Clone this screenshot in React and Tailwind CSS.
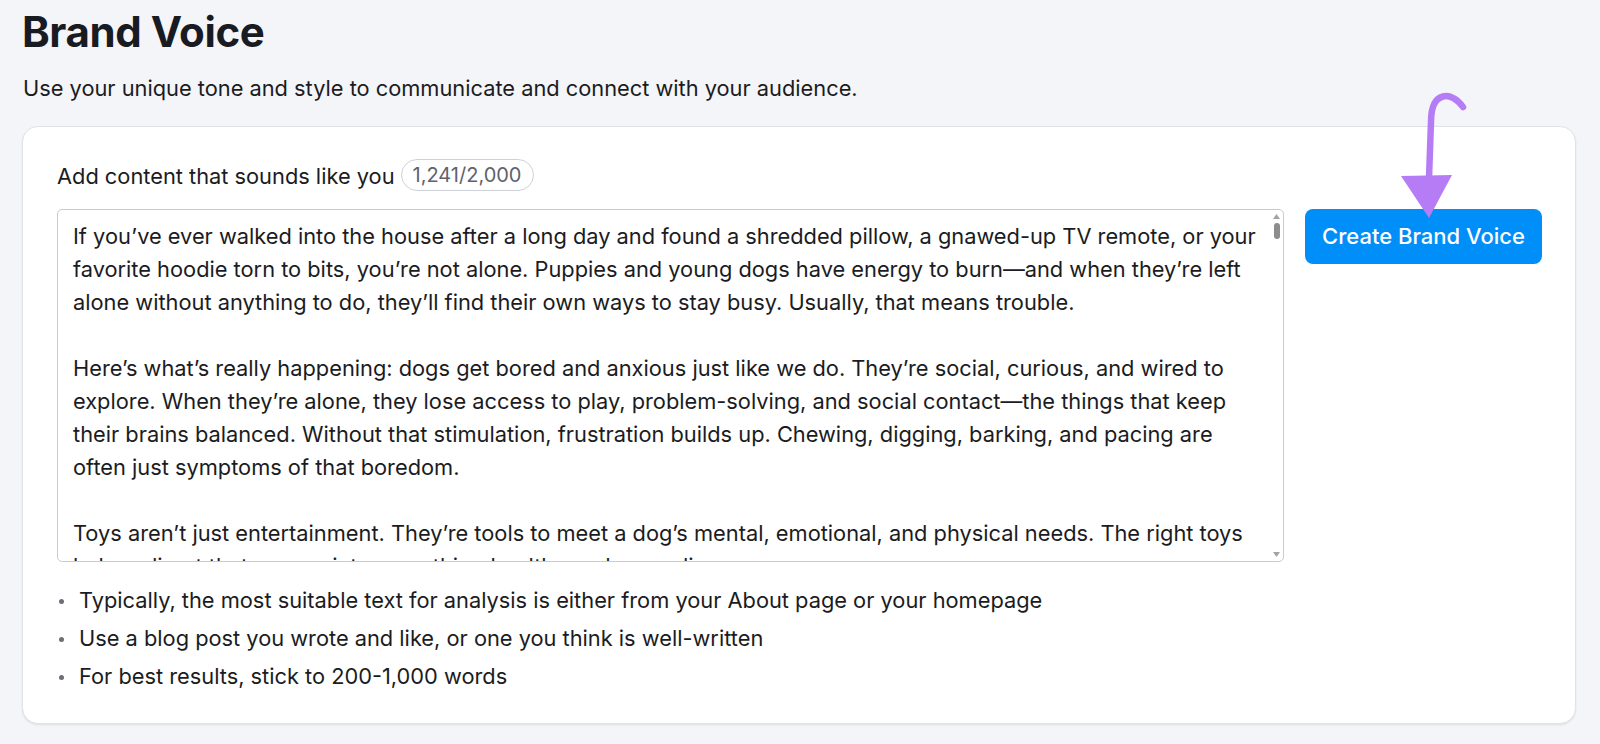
import React from 'react';

const sampleLines = [
  'If you’ve ever walked into the house after a long day and found a shredded pillow, a gnawed-up TV remote, or your',
  'favorite hoodie torn to bits, you’re not alone. Puppies and young dogs have energy to burn—and when they’re left',
  'alone without anything to do, they’ll find their own ways to stay busy. Usually, that means trouble.',
  '',
  'Here’s what’s really happening: dogs get bored and anxious just like we do. They’re social, curious, and wired to',
  'explore. When they’re alone, they lose access to play, problem-solving, and social contact—the things that keep',
  'their brains balanced. Without that stimulation, frustration builds up. Chewing, digging, barking, and pacing are',
  'often just symptoms of that boredom.',
  '',
  'Toys aren’t just entertainment. They’re tools to meet a dog’s mental, emotional, and physical needs. The right toys',
  'help redirect that energy into something healthy and rewarding.',
];

const tips = [
  'Typically, the most suitable text for analysis is either from your About page or your homepage',
  'Use a blog post you wrote and like, or one you think is well-written',
  'For best results, stick to 200-1,000 words',
];

const ScrollTrack = () => (
  <div className="w-[13px] flex-shrink-0 flex flex-col items-center pt-[4px] pb-[4px]">
    <svg width="7" height="5" viewBox="0 0 7 5">
      <path d="M3.5 0 L7 5 L0 5 Z" fill="#a3a3a3" />
    </svg>
    <div className="w-[6px] h-[16px] rounded-full bg-[#8d8d8d] mt-[4px]" />
    <div className="flex-1" />
    <svg width="7" height="5" viewBox="0 0 7 5">
      <path d="M0 0 L7 0 L3.5 5 Z" fill="#a3a3a3" />
    </svg>
  </div>
);

const App = () => {
  return (
    <div className="relative min-h-screen bg-[#f4f5f9] px-[22px] pt-[6px] font-['Inter',sans-serif] text-[#1b1c22]">
      <h1 className="text-[42px] leading-[52px] font-bold tracking-[-0.01em] text-[#191b23]">Brand Voice</h1>
      <p className="mt-[16px] text-[21.8px] leading-[28px] px-[1px]">
        Use your unique tone and style to communicate and connect with your audience.
      </p>

      <div className="mt-[24px] w-[1554px] bg-white rounded-2xl border border-[#e2e3e9] shadow-[0_1px_2px_rgba(25,27,35,0.1)] pt-[32px] pb-[28px] pl-[34px] pr-[33px]">
        <div className="flex items-center gap-[6px] h-[31px]">
          <span className="text-[21.8px] leading-[28px] mt-[3px]">Add content that sounds like you</span>
          <span className="h-[32px] px-[11px] flex items-center rounded-full border border-[#cfd1d8] text-[20px] text-[#5f626d]">
            1,241/2,000
          </span>
        </div>

        <div className="flex items-start gap-[21px] mt-[19px]">
          <div className="w-[1227px] h-[353px] flex border border-[#c9cbd2] rounded-[5px] bg-white overflow-hidden">
            <div className="flex-1 overflow-hidden pl-[15px] pt-[10px] text-[21.8px] leading-[33px] whitespace-pre text-[#1b1c22]">
              {sampleLines.map((line, i) => (
                <div key={i} className="h-[33px]">{line}</div>
              ))}
            </div>
            <ScrollTrack />
          </div>

          <button className="w-[237px] h-[55px] rounded-lg bg-[#008ff8] text-white text-[22px] font-medium">
            Create Brand Voice
          </button>
        </div>

        <ul className="mt-[19px] pl-[2px]">
          {tips.map((tip) => (
            <li key={tip} className="flex items-center gap-[15px] text-[21.8px] leading-[38px]">
              <span className="w-[5px] h-[5px] rounded-full bg-[#6c6e79] mt-[3px] flex-shrink-0" />
              {tip}
            </li>
          ))}
        </ul>
      </div>

      {/* annotation arrow pointing at the button */}
      <svg className="absolute left-0 top-0 pointer-events-none" width="1600" height="744">
        <path
          d="M1463 107 C1452 91 1431 90 1431 122 L1429 178"
          fill="none"
          stroke="#b57cf6"
          strokeWidth="6.5"
          strokeLinecap="round"
        />
        <path d="M1401 176 L1452 175 L1429 218 Z" fill="#b57cf6" />
      </svg>
    </div>
  );
};

export default App;
